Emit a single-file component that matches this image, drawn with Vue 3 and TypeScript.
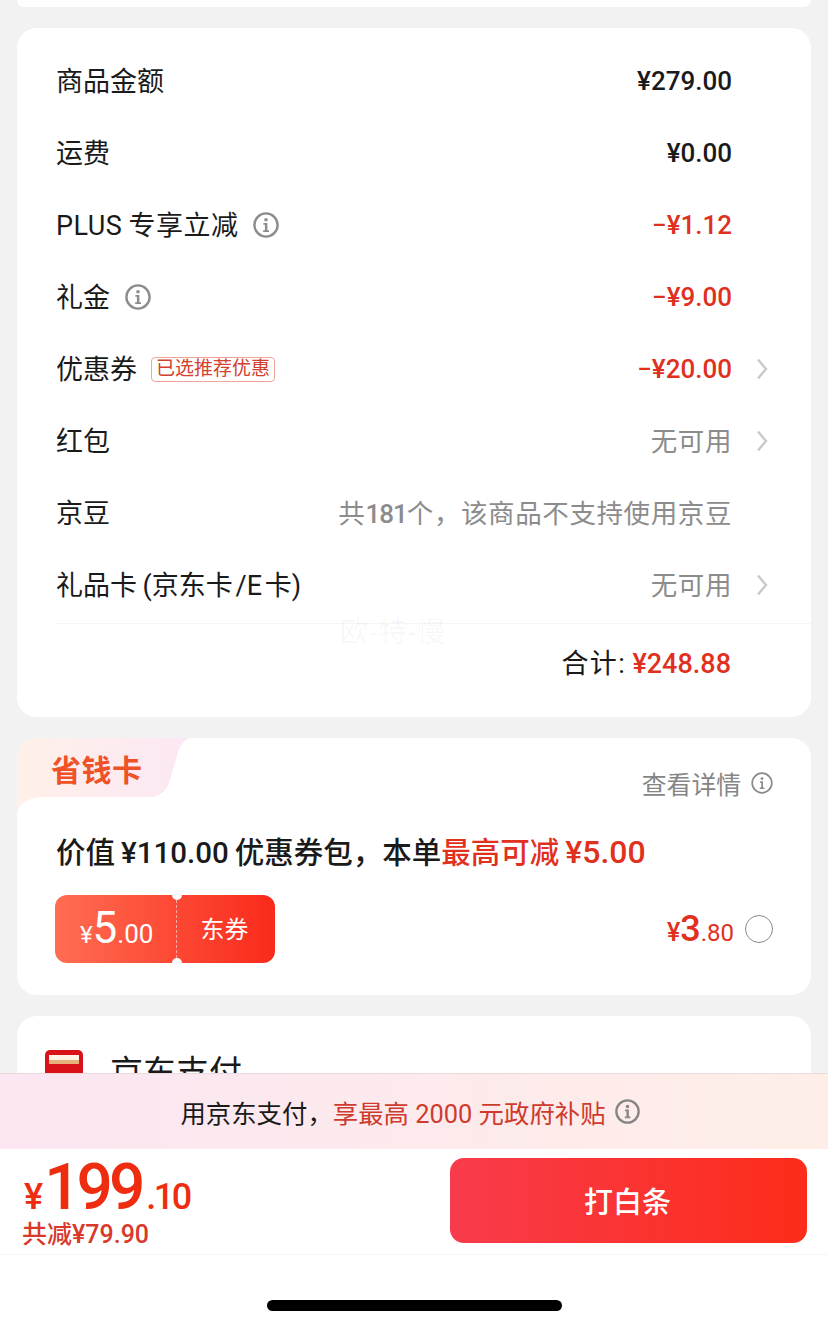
<template>
  <div class="page">
    <div class="scroll-area">
      <div class="card card--stub"></div>

      <section class="card fee-card">
        <div v-for="row in feeRows" :key="row.label" class="fee-row">
          <span class="fee-label" :class="{ 'fee-label--latin': row.latin }">{{ row.label }}</span>
          <svg v-if="row.info" class="info-icon" viewBox="0 0 26 26" aria-hidden="true">
            <circle cx="13" cy="13" r="11.6" fill="none" stroke="#8c8c8c" stroke-width="2.4" />
            <circle cx="13" cy="7.8" r="1.8" fill="#8c8c8c" />
            <path d="M10.4 11h4v7.2h1.6v1.8h-5.8v-1.8h1.7v-5.4h-1.5z" fill="#8c8c8c" />
          </svg>
          <span v-if="row.tag" class="fee-tag">{{ row.tag }}</span>
          <span class="fee-value" :class="`fee-value--${row.tone}`">{{ row.lead }}<b v-if="row.count">{{ row.count }}</b>{{ row.value }}</span>
          <span v-if="row.arrow" class="fee-arrow">
            <svg viewBox="0 0 12 22" aria-hidden="true">
              <path d="M2 1.5 10 11 2 20.5" fill="none" stroke="#c8c8c8" stroke-width="2.4" />
            </svg>
          </span>
        </div>
        <div class="fee-total">
          <span class="total-label">合计:</span>
          <span class="total-value">¥248.88</span>
        </div>
        <span class="watermark">欧-特-慢</span>
      </section>

      <section class="card saver-card">
        <svg class="saver-shape" viewBox="0 0 180 80" aria-hidden="true">
          <defs>
            <linearGradient id="saverTab" x1="0" y1="0" x2="1" y2="0">
              <stop offset="0" stop-color="#fff0e9" />
              <stop offset="1" stop-color="#fbe7f4" />
            </linearGradient>
          </defs>
          <path
            d="M0 78V22Q0 0 22 0H175C168 0 164 6 161 14L153 42C150 52 143 59 133 59H28C12 59 0 66 0 78Z"
            fill="url(#saverTab)"
          />
        </svg>
        <div class="saver-head">
          <span class="saver-title">省钱卡</span>
          <span class="saver-detail">
            查看详情
            <svg class="info-icon info-icon--small" viewBox="0 0 26 26" aria-hidden="true">
              <circle cx="13" cy="13" r="11.6" fill="none" stroke="#8a8a8a" stroke-width="2" />
              <circle cx="13" cy="7.8" r="1.7" fill="#8a8a8a" />
              <path d="M10.6 11h3.6v7.4h1.6v1.6h-5.4v-1.6h1.7v-5.8h-1.5z" fill="#8a8a8a" />
            </svg>
          </span>
        </div>
        <p class="saver-line">
          价值&#8201;¥110.00&#8201;优惠券包，本单<em>最高可减&#8201;<span class="saver-max">¥5.00</span></em>
        </p>
        <div class="saver-offer">
          <div class="coupon">
            <div class="coupon-amount">
              <span class="coupon-yen">¥</span><span class="coupon-int">5</span><span class="coupon-dec">.00</span>
            </div>
            <div class="coupon-type">东券</div>
            <i class="coupon-notch coupon-notch--top"></i>
            <i class="coupon-notch coupon-notch--bottom"></i>
          </div>
          <div class="saver-price">
            <span class="price-yen">¥</span><span class="price-int">3</span><span class="price-dec">.80</span>
          </div>
          <span class="radio"></span>
        </div>
      </section>

      <section class="card pay-card">
        <div class="pay-icon"><i></i></div>
        <span class="pay-name">京东支付</span>
      </section>
    </div>

    <footer class="footer">
      <div class="promo">
        <span>用京东支付，</span><span class="promo-red">享最高 2000 元政府补贴</span>
        <svg class="info-icon info-icon--promo" viewBox="0 0 26 26" aria-hidden="true">
          <circle cx="13" cy="13" r="11.6" fill="none" stroke="#858585" stroke-width="2.4" />
          <circle cx="13" cy="7.8" r="1.8" fill="#858585" />
          <path d="M10.4 11h4v7.2h1.6v1.8h-5.8v-1.8h1.7v-5.4h-1.5z" fill="#858585" />
        </svg>
      </div>
      <div class="checkout">
        <div class="checkout-price">
          <div class="pay-total">
            <span class="pay-yen">¥</span><span class="pay-int">199</span><span class="pay-dec">.10</span>
          </div>
          <div class="pay-saved">共减¥79.90</div>
        </div>
        <button class="pay-btn" type="button">打白条</button>
      </div>
      <div class="home-bar"><span></span></div>
    </footer>
  </div>
</template>

<script setup lang="ts">
interface FeeRow {
  label: string
  value: string
  tone: 'dark' | 'red' | 'muted'
  info?: boolean
  tag?: string
  arrow?: boolean
  latin?: boolean
  lead?: string
  count?: string
}

const feeRows: FeeRow[] = [
  { label: '商品金额', value: '¥279.00', tone: 'dark' },
  { label: '运费', value: '¥0.00', tone: 'dark' },
  { label: 'PLUS\u2009专享立减', value: '−¥1.12', tone: 'red', info: true, latin: true },
  { label: '礼金', value: '−¥9.00', tone: 'red', info: true },
  { label: '优惠券', value: '−¥20.00', tone: 'red', tag: '已选推荐优惠', arrow: true },
  { label: '红包', value: '无可用', tone: 'muted', arrow: true },
  { label: '京豆', lead: '共', count: '181', value: '个，该商品不支持使用京豆', tone: 'muted' },
  { label: '礼品卡\u2009(京东卡\u200a/E\u200a卡)', value: '无可用', tone: 'muted', arrow: true },
]
</script>

<style>
html,
body {
  margin: 0;
  background: #f2f2f2;
}
</style>

<style scoped>
.page {
  width: 828px;
  height: 1328px;
  display: flex;
  flex-direction: column;
  overflow: hidden;
  background: #f2f2f2;
  color: #1a1a1a;
  font-family: Roboto, "Noto Sans CJK SC", sans-serif;
}

.scroll-area {
  flex: 1;
  min-height: 0;
  overflow: hidden;
  padding: 0 17px;
  display: flex;
  flex-direction: column;
  gap: 21px;
}

.card {
  flex: none;
  background: #fff;
  border-radius: 20px;
}

.card--stub {
  height: 7px;
  border-radius: 0 0 16px 16px;
}

.fee-card {
  position: relative;
  height: 689px;
  box-sizing: border-box;
  padding-top: 17px;
}

.fee-row {
  height: 72px;
  padding: 0 79px 0 39px;
  display: flex;
  align-items: center;
  font-size: 26px;
}

.fee-label {
  margin-bottom: 4px;
  font-size: 27px;
  white-space: nowrap;
}

.fee-label--latin {
  letter-spacing: 0.5px;
}

.info-icon {
  width: 26px;
  height: 26px;
  margin-left: 15px;
  flex: none;
}

.fee-tag {
  margin: 1px 0 0 14px;
  height: 25px;
  padding: 0 4px;
  box-sizing: border-box;
  border: 1px solid #f1a597;
  border-radius: 4px;
  color: #d3402f;
  font-size: 19px;
  line-height: 22px;
  white-space: nowrap;
}

.fee-value {
  margin-left: auto;
  font-weight: 500;
  white-space: nowrap;
}

.fee-value--red {
  color: #e0301e;
}

.fee-value--muted {
  margin-bottom: 4px;
  color: #8c8c8c;
  font-size: 26.5px;
  font-weight: 400;
  letter-spacing: 0.6px;
}

.fee-value--muted b {
  font-size: 26px;
  font-weight: 500;
  letter-spacing: -1px;
}

.fee-arrow {
  width: 12px;
  height: 22px;
  margin: 0 -36px 0 24px;
  flex: none;
}

.fee-arrow svg {
  display: block;
  width: 12px;
  height: 22px;
}

.fee-total {
  margin: 2px 0 0 39px;
  height: 79px;
  padding-right: 80px;
  border-top: 1px solid #f5f5f5;
  display: flex;
  justify-content: flex-end;
  align-items: center;
  gap: 6px;
  font-size: 27px;
}

.total-label {
  margin-bottom: 4px;
  letter-spacing: 1.5px;
}

.total-value {
  color: #e0301e;
  font-weight: 500;
}

.watermark {
  position: absolute;
  left: 323px;
  top: 581px;
  color: rgba(0, 0, 0, 0.035);
  font-size: 28.5px;
  letter-spacing: 1px;
  white-space: nowrap;
}

.saver-card {
  position: relative;
  height: 257px;
  overflow: hidden;
}

.saver-shape {
  position: absolute;
  left: 0;
  top: 0;
  width: 180px;
  height: 80px;
}

.saver-head {
  position: relative;
  height: 59px;
  padding: 0 38px 0 34px;
  display: flex;
  justify-content: space-between;
  align-items: center;
}

.saver-title {
  color: #ef5226;
  font-size: 30px;
  font-weight: 700;
  letter-spacing: 0.5px;
  margin-top: 1px;
}

.saver-detail {
  display: flex;
  align-items: center;
  margin-top: 30px;
  color: #858585;
  font-size: 24.8px;
}

.info-icon--small {
  width: 22px;
  height: 22px;
  margin-left: 10px;
}

.saver-line {
  margin: 31px 0 0 39px;
  font-size: 29.5px;
  line-height: 48px;
  font-weight: 500;
  white-space: nowrap;
}

.saver-line em {
  color: #e0301e;
  font-style: normal;
}

.saver-max {
  font-size: 32px;
}

.saver-offer {
  margin: 18px 0 0 38px;
  padding-right: 38px;
  display: flex;
  align-items: center;
}

.coupon {
  position: relative;
  width: 220px;
  height: 68px;
  display: flex;
  border-radius: 12px;
  background: linear-gradient(90deg, #ff6d52, #fa2a1b);
  color: #fff;
}

.coupon-amount {
  width: 122px;
  box-sizing: border-box;
  padding: 6px 0 0 25px;
  border-right: 1px dashed rgba(255, 255, 255, 0.55);
  white-space: nowrap;
  display: flex;
  align-items: baseline;
  line-height: 54px;
}

.coupon-yen {
  font-size: 24px;
}

.coupon-int {
  font-size: 44px;
}

.coupon-dec {
  font-size: 26px;
}

.coupon-type {
  flex: 1;
  padding-right: 3px;
  text-align: center;
  font-size: 24px;
  line-height: 70px;
}

.coupon-notch {
  position: absolute;
  left: 117px;
  width: 10px;
  height: 10px;
  border-radius: 50%;
  background: #fff;
}

.coupon-notch--top {
  top: -5px;
}

.coupon-notch--bottom {
  bottom: -5px;
}

.saver-price {
  margin-left: auto;
  color: #e0301e;
  display: flex;
  align-items: baseline;
  white-space: nowrap;
}

.price-yen {
  font-size: 25px;
  font-weight: 500;
}

.price-int {
  font-size: 36px;
  font-weight: 500;
}

.price-dec {
  font-size: 24px;
}

.radio {
  width: 26px;
  height: 26px;
  margin-left: 11px;
  border: 1px solid #8a8a8a;
  border-radius: 50%;
  flex: none;
}

.pay-card {
  height: 120px;
  box-sizing: border-box;
  padding: 34px 0 0 28px;
  display: flex;
  align-items: flex-start;
}

.pay-icon {
  width: 38px;
  height: 36px;
  box-sizing: border-box;
  padding: 5px 4px 0;
  border-radius: 5px;
  background: #d9121a;
}

.pay-icon i {
  display: block;
  height: 9px;
  background: linear-gradient(#fff3e6 50%, #e6b27a 50%);
}

.pay-name {
  margin: 0 0 0 27px;
  font-size: 33px;
  line-height: 46px;
}

.footer {
  flex: none;
  background: #fff;
}

.promo {
  height: 76px;
  box-sizing: border-box;
  padding-right: 8px;
  border-top: 1px solid #ecd9dc;
  background: linear-gradient(90deg, #fbe6f2, #feeee7);
  display: flex;
  justify-content: center;
  align-items: center;
  font-size: 25.4px;
  white-space: nowrap;
}

.promo-red {
  color: #cf3a2e;
}

.info-icon--promo {
  width: 25px;
  height: 25px;
  margin-left: 9px;
}

.checkout {
  height: 106px;
  box-sizing: border-box;
  padding: 9px 21px 12px 24px;
  border-bottom: 1px solid #f5f5f5;
  display: flex;
  justify-content: space-between;
}

.checkout-price {
  color: #ee2c10;
}

.pay-total {
  height: 60px;
  display: flex;
  align-items: baseline;
  line-height: 60px;
  white-space: nowrap;
}

.pay-yen {
  font-size: 36px;
  font-weight: 500;
  margin-right: 1px;
}

.pay-int {
  font-size: 64px;
  font-weight: 500;
  letter-spacing: -4px;
}

.pay-dec {
  margin-left: 5px;
  font-size: 36px;
  font-weight: 500;
  letter-spacing: -2.5px;
}

.pay-saved {
  margin: 1px 0 0 -2px;
  color: #d9392b;
  font-size: 25px;
  font-weight: 500;
  line-height: 32px;
  white-space: nowrap;
}

.pay-btn {
  width: 357px;
  height: 85px;
  padding: 0 2px 2px 0;
  border: 0;
  border-radius: 14px;
  background: linear-gradient(90deg, #f83b4b, #fd2c1a);
  color: #fff;
  font-family: inherit;
  font-size: 29px;
  font-weight: 500;
}

.home-bar {
  height: 73px;
  padding-top: 45px;
  box-sizing: border-box;
  display: flex;
  justify-content: center;
}

.home-bar span {
  width: 295px;
  height: 11px;
  border-radius: 6px;
  background: #000;
}
</style>
